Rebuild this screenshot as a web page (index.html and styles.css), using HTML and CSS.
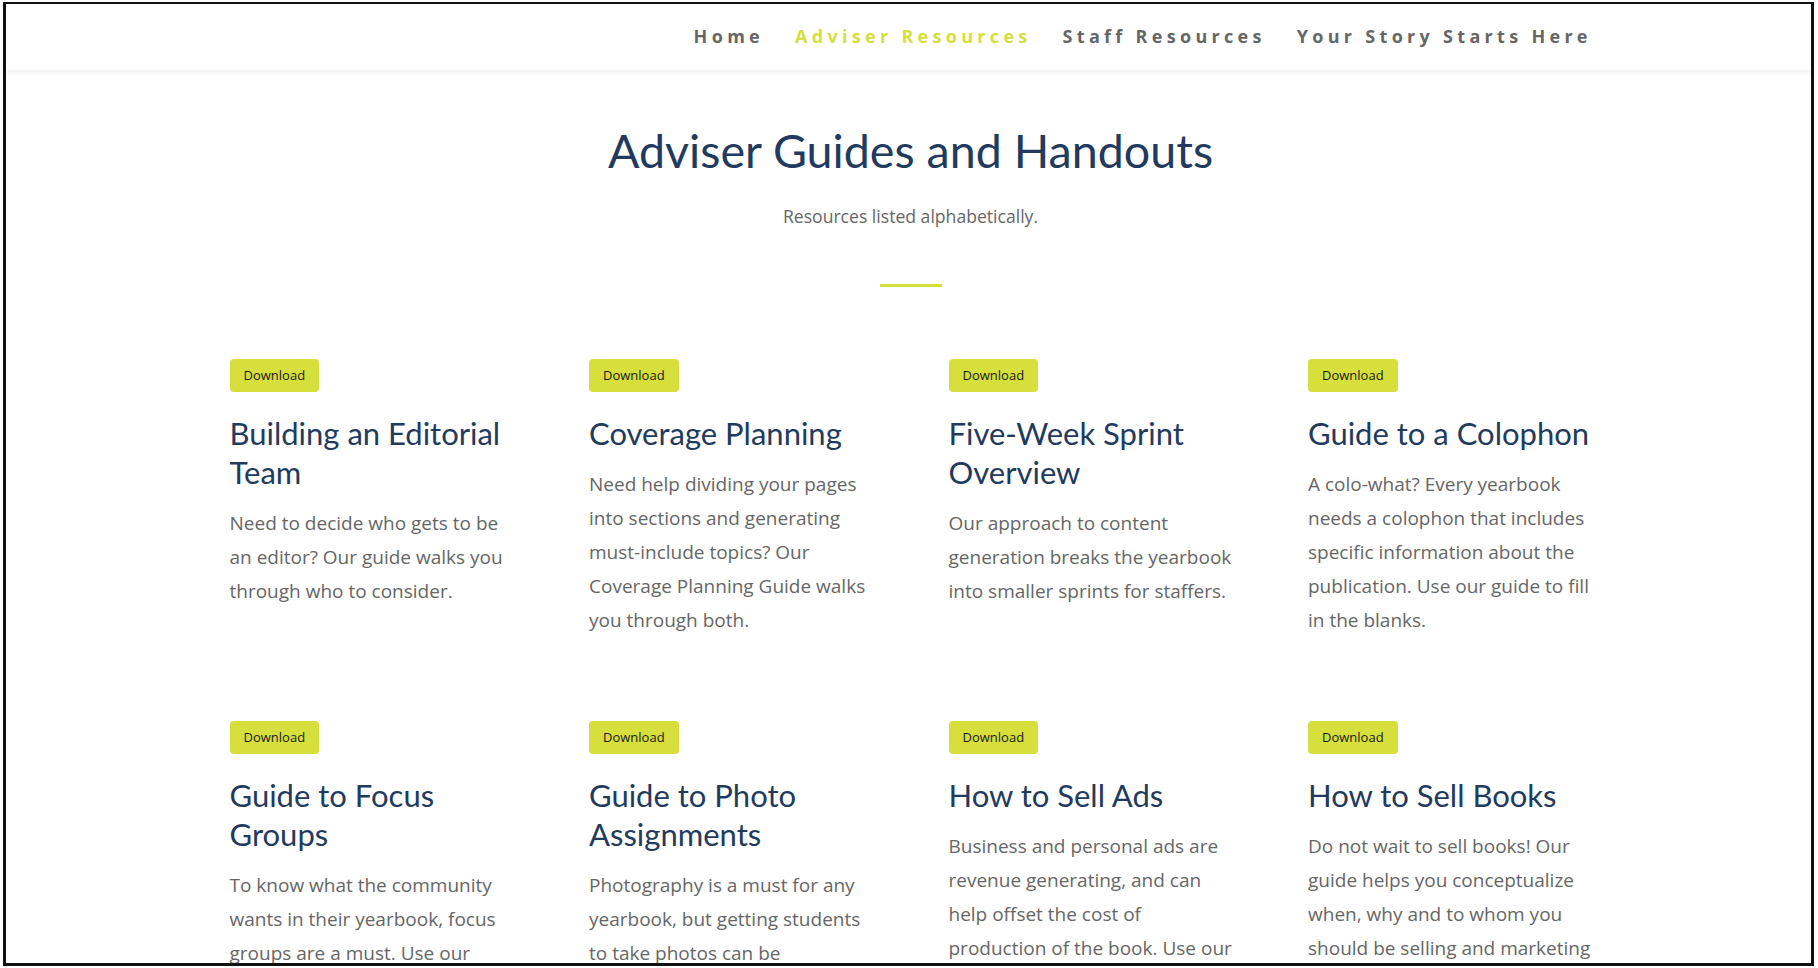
FILE: index.html
```html
<!DOCTYPE html>
<html lang="en">
<head>
<meta charset="utf-8">
<title>Adviser Guides and Handouts</title>
<link rel="stylesheet" href="styles.css">
</head>
<body>
<div class="frame">
  <header class="site-header">
    <nav class="container nav">
      <a class="nav-link" href="#">Home</a>
      <a class="nav-link active" href="#">Adviser Resources</a>
      <a class="nav-link" href="#">Staff Resources</a>
      <a class="nav-link" href="#">Your Story Starts Here</a>
    </nav>
  </header>
  <main class="container">
    <section class="intro">
      <h1 class="page-title">Adviser Guides and Handouts</h1>
      <p class="subtitle">Resources listed alphabetically.</p>
      <div class="divider"></div>
    </section>
    <section class="grid">
      <article class="card">
        <a class="btn" href="#">Download</a>
        <h3 class="card-title">Building an Editorial Team</h3>
        <p class="card-text">Need to decide who gets to be an editor? Our guide walks you through who to consider.</p>
      </article>
      <article class="card">
        <a class="btn" href="#">Download</a>
        <h3 class="card-title">Coverage Planning</h3>
        <p class="card-text">Need help dividing your pages into sections and generating must-include topics? Our Coverage Planning Guide walks you through both.</p>
      </article>
      <article class="card">
        <a class="btn" href="#">Download</a>
        <h3 class="card-title">Five-Week Sprint Overview</h3>
        <p class="card-text">Our approach to content generation breaks the yearbook into smaller sprints for staffers.</p>
      </article>
      <article class="card">
        <a class="btn" href="#">Download</a>
        <h3 class="card-title">Guide to a Colophon</h3>
        <p class="card-text">A colo-what? Every yearbook needs a colophon that includes specific information about the publication. Use our guide to fill in the blanks.</p>
      </article>
      <article class="card">
        <a class="btn" href="#">Download</a>
        <h3 class="card-title">Guide to Focus Groups</h3>
        <p class="card-text">To know what the community wants in their yearbook, focus groups are a must. Use our guide to plan and run yours.</p>
      </article>
      <article class="card">
        <a class="btn" href="#">Download</a>
        <h3 class="card-title">Guide to Photo Assignments</h3>
        <p class="card-text">Photography is a must for any yearbook, but getting students to take photos can be challenging. Our guide helps.</p>
      </article>
      <article class="card">
        <a class="btn" href="#">Download</a>
        <h3 class="card-title">How to Sell Ads</h3>
        <p class="card-text">Business and personal ads are revenue generating, and can help offset the cost of production of the book. Use our guide to get started.</p>
      </article>
      <article class="card">
        <a class="btn" href="#">Download</a>
        <h3 class="card-title">How to Sell Books</h3>
        <p class="card-text">Do not wait to sell books! Our guide helps you conceptualize when, why and to whom you should be selling and marketing your book.</p>
      </article>
    </section>
  </main>
</div>
</body>
</html>
```

FILE: styles.css
```css
* { box-sizing: border-box; }

html, body {
  margin: 0;
  padding: 0;
  background: #ffffff;
}

body {
  font-family: "Open Sans", "Liberation Sans", sans-serif;
  color: #666666;
}

.frame {
  margin: 2px 4px 2px 3px;
  height: 964px;
  border-style: solid;
  border-color: #111111;
  border-width: 2px 3px 3px 3px;
  overflow: hidden;
  background: #ffffff;
}

.container {
  width: 1358px;
  margin: 0 auto;
}

.site-header {
  height: 66px;
  background: #ffffff;
  box-shadow: 0 2px 6px rgba(0, 0, 0, 0.07);
  position: relative;
  z-index: 1;
}

.nav {
  display: flex;
  justify-content: flex-end;
  align-items: center;
  height: 100%;
  padding-bottom: 2px;
  gap: 31px;
}

.nav-link {
  font-family: "Open Sans", sans-serif;
  font-weight: 700;
  font-size: 18px;
  letter-spacing: 4.3px;
  color: #666666;
  text-decoration: none;
}

.nav-link:last-child {
  margin-right: -4.3px;
}

.nav-link.active {
  color: #d5df3b;
}

.intro {
  display: flex;
  flex-direction: column;
  align-items: center;
  padding-top: 52px;
  padding-left: 4px;
}

.page-title {
  margin: 0;
  font-family: Lato, "Noto Sans", sans-serif;
  font-weight: 400;
  font-size: 46.6px;
  line-height: 56px;
  color: #223a5e;
}

.subtitle {
  margin: 26px 0 0;
  font-size: 17.6px;
  line-height: 24px;
}

.divider {
  width: 62px;
  height: 3px;
  background: #d5df3b;
  margin-top: 56px;
}

.grid {
  display: grid;
  grid-template-columns: repeat(4, 286px);
  column-gap: 73.5px;
  row-gap: 84px;
  margin-top: 72px;
}

.card {
  display: flex;
  flex-direction: column;
  align-items: flex-start;
}

.btn {
  display: inline-block;
  background: #d6df3b;
  color: #1a1a1a;
  font-size: 13px;
  line-height: 19px;
  padding: 7px 14px;
  border-radius: 4px;
  text-decoration: none;
}

.card-title {
  margin: 22px 0 14px;
  font-family: Lato, "Noto Sans", sans-serif;
  font-weight: 400;
  font-size: 31px;
  line-height: 39px;
  color: #223a5e;
}

.card-text {
  margin: 0;
  font-size: 19px;
  line-height: 34px;
  color: #666666;
}
```
